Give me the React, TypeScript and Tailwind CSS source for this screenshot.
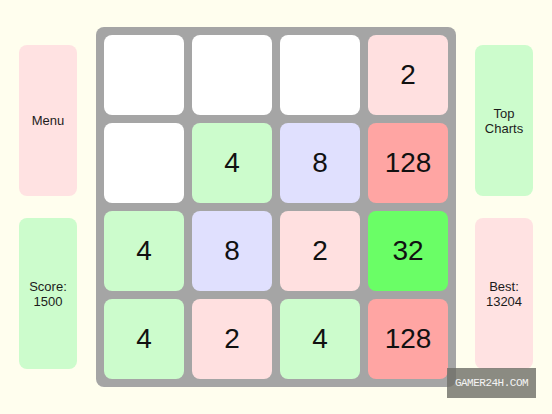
const tiles: (number | null)[] = [
  null, null, null, 2,
  null, 4, 8, 128,
  4, 8, 2, 32,
  4, 2, 4, 128,
];

const tileColor: Record<number, string> = {
  2: "bg-[#ffe0e0]",
  4: "bg-[#ccfccc]",
  8: "bg-[#e0e0fe]",
  32: "bg-[#6afe66]",
  128: "bg-[#ffa5a3]",
};

function SideButton({ color, children }: { color: string; children: React.ReactNode }) {
  return (
    <div className={`flex-1 rounded-lg ${color} flex items-center justify-center text-center text-[13px] leading-[15px] text-[#1c1c1c]`}>
      <span>{children}</span>
    </div>
  );
}

export default function App() {
  return (
    <div
      className="relative w-[552px] h-[414px] bg-[#fffeee] flex items-center gap-[19px] px-[19px]"
      style={{ fontFamily: '"Liberation Sans", Arial, sans-serif' }}
    >
      {/* Left column */}
      <div className="w-[58px] h-[360px] flex flex-col gap-[22px] py-[18px]">
        <SideButton color="bg-[#ffe2e2]">Menu</SideButton>
        <SideButton color="bg-[#ccfccc]">
          Score:
          <br />
          1500
        </SideButton>
      </div>

      {/* Board */}
      <div className="w-[360px] h-[360px] rounded-lg bg-[#a5a5a5] p-2 grid grid-cols-4 grid-rows-4 gap-2">
        {tiles.map((v, i) => (
          <div
            key={i}
            className={`rounded-lg flex items-center justify-center text-[28px] text-[#111] ${v ? tileColor[v] : "bg-white"}`}
          >
            {v ?? ""}
          </div>
        ))}
      </div>

      {/* Right column */}
      <div className="w-[58px] h-[360px] flex flex-col gap-[22px] py-[18px]">
        <SideButton color="bg-[#ccfccc]">
          Top
          <br />
          Charts
        </SideButton>
        <SideButton color="bg-[#ffe2e2]">
          Best:
          <br />
          13204
        </SideButton>
      </div>

      {/* Watermark */}
      <div className="absolute left-[447px] top-[368px] w-[89px] h-[30px] bg-[#6e6e66]/80 flex items-center justify-center">
        <span
          className="text-[11px] tracking-[-0.5px] text-[#f4f4f4]"
          style={{ fontFamily: '"Liberation Mono", monospace' }}
        >
          GAMER24H.COM
        </span>
      </div>
    </div>
  );
}
